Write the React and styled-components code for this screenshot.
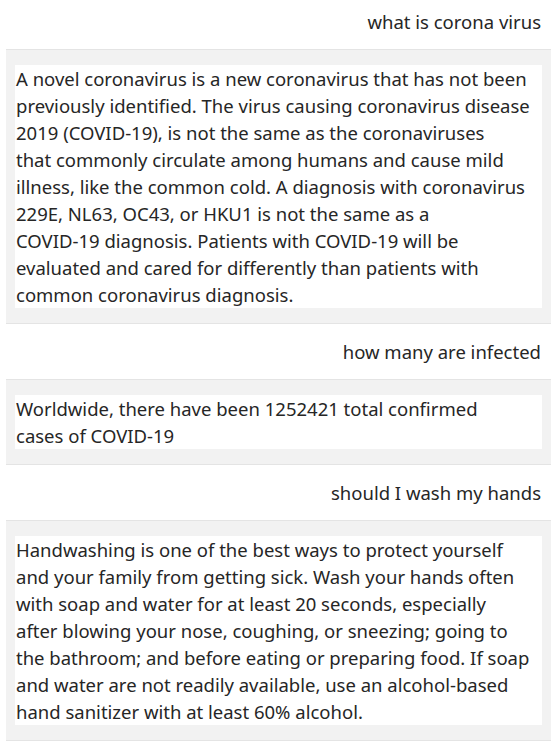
import React from "react";
import styled, { createGlobalStyle } from "styled-components";

const Global = createGlobalStyle`
  html, body { margin: 0; padding: 0; background: #ffffff; }
  body { font-family: "Noto Sans", "Open Sans", sans-serif; }
`;

const Chat = styled.div`
  display: flex;
  flex-direction: column;
  padding: 0 7px 0 6px;
`;

const UserRow = styled.div`
  padding: ${(p) => (p.$first ? "8px" : "14px")} 10px 14px 10px;
  text-align: right;
  font-size: 18.5px;
  line-height: 27px;
  color: #262626;
`;

const BotCard = styled.div`
  background: #f2f2f2;
  border-top: 1px solid #e4e4e4;
  border-bottom: 1px solid #e4e4e4;
  padding: 15px 9px;
`;

const BotText = styled.div`
  background: #ffffff;
  padding: 0 1px;
  font-size: 18.5px;
  line-height: 27px;
  color: #262626;
  white-space: pre;
  overflow: hidden;
`;

const messages = [
  {
    q: "what is corona virus",
    a: [
      "A novel coronavirus is a new coronavirus that has not been",
      "previously identified. The virus causing coronavirus disease",
      "2019 (COVID-19), is not the same as the coronaviruses",
      "that commonly circulate among humans and cause mild",
      "illness, like the common cold. A diagnosis with coronavirus",
      "229E, NL63, OC43, or HKU1 is not the same as a",
      "COVID-19 diagnosis. Patients with COVID-19 will be",
      "evaluated and cared for differently than patients with",
      "common coronavirus diagnosis.",
    ],
  },
  {
    q: "how many are infected",
    a: [
      "Worldwide, there have been 1252421 total confirmed",
      "cases of COVID-19",
    ],
  },
  {
    q: "should I wash my hands",
    a: [
      "Handwashing is one of the best ways to protect yourself",
      "and your family from getting sick. Wash your hands often",
      "with soap and water for at least 20 seconds, especially",
      "after blowing your nose, coughing, or sneezing; going to",
      "the bathroom; and before eating or preparing food. If soap",
      "and water are not readily available, use an alcohol-based",
      "hand sanitizer with at least 60% alcohol.",
    ],
  },
];

export default function App() {
  return (
    <>
      <Global />
      <Chat>
        {messages.map((m, i) => (
          <React.Fragment key={i}>
            <UserRow $first={i === 0}>{m.q}</UserRow>
            <BotCard>
              <BotText>{m.a.join("\n")}</BotText>
            </BotCard>
          </React.Fragment>
        ))}
      </Chat>
    </>
  );
}
